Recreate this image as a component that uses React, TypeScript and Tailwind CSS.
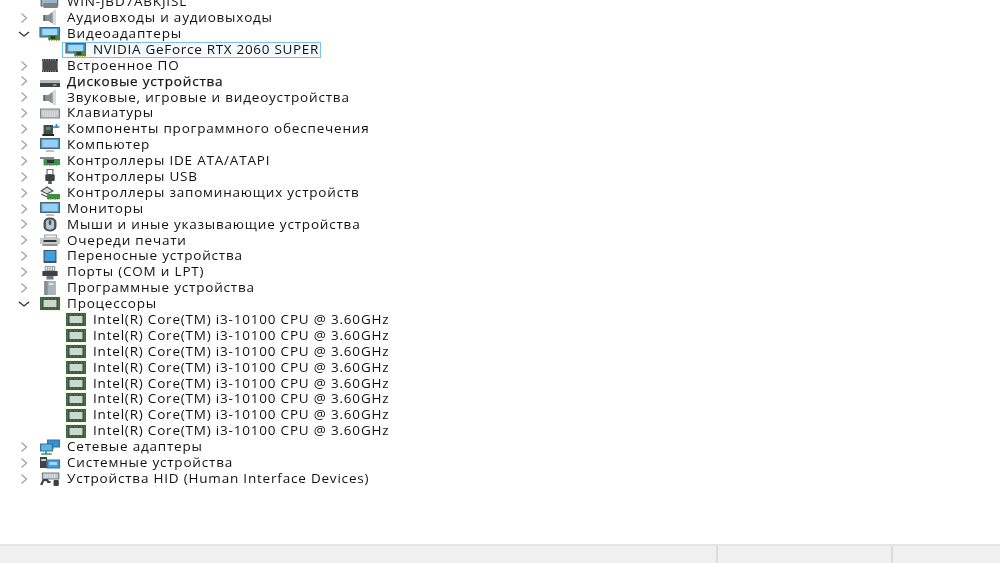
import { ReactNode } from "react";

type IconName =
  | "computer" | "audio" | "display" | "firmware" | "disk" | "keyboard" | "component"
  | "monitor" | "ide" | "usb" | "storage" | "mouse" | "printer" | "portable" | "ports"
  | "software" | "cpu" | "network" | "system" | "hid";

const Board = () => (
  <>
    <rect x="7" y="9" width="10" height="5" fill="#3f8f3c" />
    <rect x="9" y="10" width="4" height="3" fill="#2c3e2c" />
    <path d="M8 14v1M10 14v1M12 14v1M14 14v1M16 14v1" stroke="#b59a3a" />
  </>
);

const shapes: Record<IconName, ReactNode> = {
  computer: (
    <>
      <rect x="1" y="3" width="14" height="9" fill="#9fb4c4" stroke="#59636b" />
      <rect x="3" y="9" width="12" height="5" fill="#7b8288" />
    </>
  ),
  audio: (
    <>
      <path d="M3 5h4l6-5v15l-6-4H3z" fill="#8b9095" />
      <path d="M12 1v13" stroke="#d6d9db" strokeWidth="2.5" />
      <path d="M3.5 5v6" stroke="#45494d" />
    </>
  ),
  display: (
    <>
      <rect x="0" y="1.5" width="16.5" height="9.5" fill="#3e9ad8" stroke="#50626e" />
      <rect x="2" y="3" width="12.5" height="6" fill="#a5d6f2" />
      <Board />
    </>
  ),
  firmware: (
    <>
      <rect x="2" y="1" width="13" height="13" fill="#4a4d50" />
      <path d="M2 1h13v2H2zM2 12h13v2H2z" fill="#2b2d2f" />
      <path d="M3 1.5v1M5 1.5v1M7 1.5v1M9 1.5v1M11 1.5v1M13 1.5v1M3 12.5v1M5 12.5v1M7 12.5v1M9 12.5v1M11 12.5v1M13 12.5v1" stroke="#d8d8d8" />
    </>
  ),
  disk: (
    <>
      <rect x="0" y="6" width="17" height="3" fill="#b6babd" />
      <rect x="0" y="9" width="17" height="4" fill="#3f4347" />
      <rect x="11" y="10.5" width="3" height="1" fill="#d8d8d8" />
    </>
  ),
  keyboard: (
    <>
      <rect x="0.5" y="3" width="16" height="9" fill="#c3c7ca" stroke="#7e8488" />
      <path d="M2 6h13M2 8h13M4 10h9" stroke="#f2f3f4" strokeDasharray="1 1" />
    </>
  ),
  component: (
    <>
      <rect x="3" y="3" width="8" height="9" fill="#454a4e" />
      <rect x="5" y="5" width="4" height="3" fill="#3f9a58" />
      <rect x="2" y="12" width="10" height="2" fill="#25282b" />
      <path d="M11 5h5.5M14 2v4" stroke="#2f86c8" strokeWidth="1.5" />
    </>
  ),
  monitor: (
    <>
      <rect x="0.5" y="1.5" width="16" height="10" fill="#47a3e4" stroke="#51626e" />
      <rect x="2" y="3" width="13" height="7" fill="#93d0f5" />
      <path d="M5 14h7" stroke="#a7adb2" strokeWidth="1.5" />
    </>
  ),
  ide: (
    <>
      <rect x="0" y="4" width="12" height="2" fill="#85898d" />
      <rect x="3" y="6" width="14" height="6" fill="#3f8f50" />
      <rect x="6" y="7" width="6" height="3" fill="#2c352f" />
      <path d="M4 12v1M6 12v1M8 12v1M10 12v1M12 12v1M14 12v1" stroke="#b59a3a" />
    </>
  ),
  usb: (
    <>
      <rect x="6" y="0.5" width="5" height="5" fill="#fff" stroke="#6c7074" />
      <rect x="4.5" y="5.5" width="8" height="6.5" rx="1" fill="#3d4145" />
      <rect x="7" y="12" width="3" height="3" fill="#55595d" />
    </>
  ),
  storage: (
    <>
      <path d="M1 6l5-4 5 4-5 3z" fill="#d5d8da" stroke="#4e5357" />
      <path d="M1 9l5 3 4-3" fill="none" stroke="#4e5357" />
      <rect x="6" y="9" width="11" height="5" fill="#3f8f3c" />
      <path d="M7 14v1M9 14v1M11 14v1M13 14v1M15 14v1" stroke="#b59a3a" />
    </>
  ),
  mouse: (
    <>
      <rect x="3" y="0.5" width="11" height="14" rx="5" fill="#4a4f55" />
      <rect x="5" y="2.5" width="7" height="10" rx="3" fill="#b7c5d2" />
      <rect x="7.5" y="3" width="2" height="5" rx="1" fill="#4a4f55" />
    </>
  ),
  printer: (
    <>
      <rect x="4" y="2" width="10" height="3" fill="#f4f4f4" stroke="#9a9ea1" />
      <rect x="0" y="5" width="17" height="6" fill="#c4c8cb" />
      <rect x="3" y="7" width="11" height="2" fill="#34373a" />
      <rect x="2" y="11" width="13" height="2" fill="#8f9498" />
    </>
  ),
  portable: (
    <>
      <rect x="3" y="1" width="11" height="13" fill="#45525c" />
      <rect x="4" y="2" width="9" height="10" fill="#3d9fe6" />
    </>
  ),
  ports: (
    <>
      <rect x="4" y="1" width="9" height="5" fill="#a2a6a9" />
      <path d="M5.5 2v3M7.5 2v3M9.5 2v3M11.5 2v3" stroke="#eeeeee" />
      <rect x="2" y="6" width="13" height="5" fill="#3e4246" />
      <rect x="5.5" y="11" width="6" height="3.5" fill="#777b7f" />
    </>
  ),
  software: (
    <>
      <rect x="3.5" y="1" width="10" height="14" fill="#a9b3ba" />
      <rect x="3.5" y="1" width="3" height="14" fill="#868f96" />
      <rect x="7.5" y="3" width="4" height="2" fill="#dfe4e7" />
    </>
  ),
  cpu: (
    <>
      <rect x="0" y="1" width="17" height="13" fill="#2f5f3d" />
      <path d="M1 0v15M4 0v15M7 0v15M10 0v15M13 0v15M16 0v15" stroke="#b59a3a" strokeWidth=".5" opacity=".7" />
      <rect x="3" y="4" width="11" height="7" fill="#cfd6d2" />
    </>
  ),
  network: (
    <>
      <rect x="6.5" y="1" width="10" height="7" fill="#2f93dc" stroke="#3e6f92" />
      <rect x="0.5" y="5" width="10" height="7" fill="#5fb4ea" stroke="#3e6f92" />
      <path d="M5 12v3M1 15h9M11 8v2" stroke="#3f9a58" strokeWidth="1.5" />
    </>
  ),
  system: (
    <>
      <rect x="0" y="2" width="6" height="11" fill="#3e4347" />
      <rect x="1" y="4" width="4" height="2" fill="#cfd3d6" />
      <rect x="6" y="5" width="10.5" height="8" fill="#3f9fe2" stroke="#3e6f92" />
      <rect x="8" y="7" width="6.5" height="3" fill="#a2d6f5" />
    </>
  ),
  hid: (
    <>
      <rect x="2" y="2" width="14" height="6" fill="#c0c6cb" stroke="#6f7f8c" />
      <path d="M4 4h10M4 6h10" stroke="#f3f4f5" strokeDasharray="1 1" />
      <path d="M1 14l2-5h3l1 2h2" fill="none" stroke="#3d4145" strokeWidth="2" />
      <rect x="11.5" y="9" width="4.5" height="6" rx="1" fill="#3d4145" />
    </>
  ),
};

const DevIcon = ({ name }: { name: IconName }) => (
  <svg width="20" height="15" viewBox="0 0 17 15" preserveAspectRatio="none" className="shrink-0 overflow-visible">
    {shapes[name]}
  </svg>
);

const Chevron = ({ open }: { open?: boolean }) => (
  <svg width="12" height="12" viewBox="0 0 12 12" className="shrink-0">
    <path
      d={open ? "M1 4l5 4 5-4" : "M3.5 1.5l5 4.5-5 4.5"}
      fill="none"
      stroke={open ? "#2d2d2d" : "#a3a3a3"}
      strokeWidth="1.3"
    />
  </svg>
);

const Row = ({ icon, label, open, bold }: { icon: IconName; label: string; open?: boolean; bold?: boolean }) => (
  <div className="flex h-[15.9px] items-center whitespace-nowrap pl-[18px]">
    <Chevron open={open} />
    <div className="ml-[10px] flex w-[27px] justify-start">
      <DevIcon name={icon} />
    </div>
    <span className={bold ? "[-webkit-text-stroke:0.25px_#222]" : ""}>{label}</span>
  </div>
);

const Child = ({ icon, label, selected }: { icon: IconName; label: string; selected?: boolean }) => (
  <div className="flex h-[15.9px] items-center whitespace-nowrap pl-[62px]">
    <div
      className={
        selected
          ? "flex h-[16px] w-[259px] items-center border border-[#7cc0e8] bg-[#f7fbfe] pl-[3px] tracking-[0.7px]"
          : "flex h-[16px] items-center pl-[4px]"
      }
    >
      <div className="flex w-[27px] shrink-0">
        <DevIcon name={icon} />
      </div>
      <span>{label}</span>
    </div>
  </div>
);

export default function App() {
  return (
    <div className="flex h-[563px] w-[1000px] flex-col overflow-hidden bg-white font-['Open_Sans','Liberation_Sans',sans-serif] text-[13.5px] leading-none tracking-[0.8px] text-[#111]">
      <div className="-mt-[6px] flex-1 blur-[0.3px]">
        <div className="flex h-[15.9px] items-center whitespace-nowrap pl-[40px]">
          <div className="flex w-[27px]">
            <DevIcon name="computer" />
          </div>
          <span>WIN-JBD7ABKJISL</span>
        </div>
        <Row icon="audio" label="Аудиовходы и аудиовыходы" />
        <Row icon="display" label="Видеоадаптеры" open />
        <Child icon="display" label="NVIDIA GeForce RTX 2060 SUPER" selected />
        <Row icon="firmware" label="Встроенное ПО" />
        <Row icon="disk" label="Дисковые устройства" bold />
        <Row icon="audio" label="Звуковые, игровые и видеоустройства" />
        <Row icon="keyboard" label="Клавиатуры" />
        <Row icon="component" label="Компоненты программного обеспечения" />
        <Row icon="monitor" label="Компьютер" />
        <Row icon="ide" label="Контроллеры IDE ATA/ATAPI" />
        <Row icon="usb" label="Контроллеры USB" />
        <Row icon="storage" label="Контроллеры запоминающих устройств" />
        <Row icon="monitor" label="Мониторы" />
        <Row icon="mouse" label="Мыши и иные указывающие устройства" />
        <Row icon="printer" label="Очереди печати" />
        <Row icon="portable" label="Переносные устройства" />
        <Row icon="ports" label="Порты (COM и LPT)" />
        <Row icon="software" label="Программные устройства" />
        <Row icon="cpu" label="Процессоры" open />
        {Array.from({ length: 8 }, (_, i) => (
          <Child key={i} icon="cpu" label="Intel(R) Core(TM) i3-10100 CPU @ 3.60GHz" />
        ))}
        <Row icon="network" label="Сетевые адаптеры" />
        <Row icon="system" label="Системные устройства" />
        <Row icon="hid" label="Устройства HID (Human Interface Devices)" />
      </div>
      <div className="flex h-[19px] border-t-2 border-[#e6e6e6] bg-[#f0f0f0]">
        <div className="w-[718px] border-r-2 border-[#dcdcdc]" />
        <div className="w-[175px] border-r-2 border-[#dcdcdc]" />
        <div className="flex-1" />
      </div>
    </div>
  );
}
